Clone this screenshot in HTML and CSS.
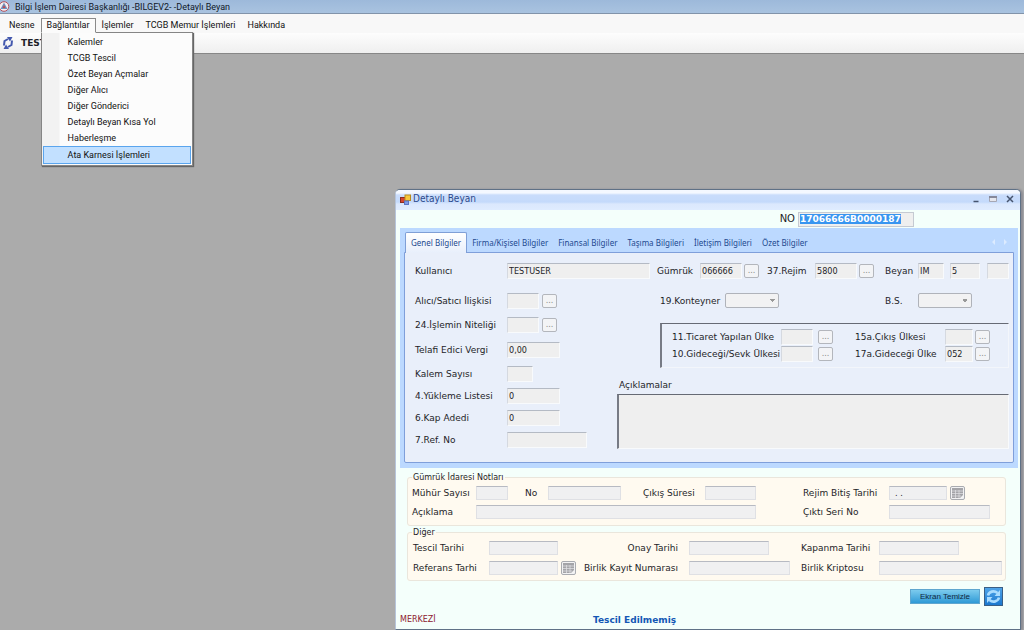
FILE: index.html
```html
<!DOCTYPE html>
<html lang="tr">
<head>
<meta charset="utf-8">
<title>Bilgi İşlem Dairesi Başkanlığı -BILGEV2- -Detaylı Beyan</title>
<link rel="stylesheet" href="styles.css">
</head>
<body>
<header class="app-title">
  <svg class="app-logo" width="11" height="11" viewBox="0 0 11 11" aria-hidden="true"><circle cx="5" cy="5.500" r="4.800" fill="#f6eef0" stroke="#b0525e"/><path d="M5 1.500L8.500 8H1.500z" fill="#6f94be"/><path d="M5 4l1.500 3h-3z" fill="#c4464e"/></svg>
  <span>Bilgi İşlem Dairesi Başkanlığı -BILGEV2- -Detaylı Beyan</span>
</header>
<nav class="menu-bar">
  <button class="menu-item" type="button">Nesne</button>
  <div class="menu-holder">
    <button class="menu-item menu-open" type="button" aria-expanded="true">Bağlantılar</button>
    <div class="dropdown" role="menu">
      <button type="button" role="menuitem">Kalemler</button>
      <button type="button" role="menuitem">TCGB Tescil</button>
      <button type="button" role="menuitem">Özet Beyan Açmalar</button>
      <button type="button" role="menuitem">Diğer Alıcı</button>
      <button type="button" role="menuitem">Diğer Gönderici</button>
      <button type="button" role="menuitem">Detaylı Beyan Kısa Yol</button>
      <button type="button" role="menuitem">Haberleşme</button>
      <button type="button" role="menuitem" class="hot">Ata Karnesi İşlemleri</button>
    </div>
  </div>
  <button class="menu-item" type="button">İşlemler</button>
  <button class="menu-item" type="button">TCGB Memur İşlemleri</button>
  <button class="menu-item" type="button">Hakkında</button>
</nav>
<div class="tool-bar">
  <svg width="12" height="12" viewBox="0 0 12 12" aria-hidden="true"><g fill="none" stroke="#4358ae" stroke-width="2"><path d="M2 8.500L2.500 4 6 2"/><path d="M10 3.500L9.500 8 6 10"/></g><path d="M5 0h5.500L8 4.500zM7 12H1.500L4 7.500z" fill="#4358ae"/></svg>
  <strong>TEST</strong>
</div>
<main class="mdi">
  <section class="window">
    <header class="win-title">
      <svg width="11" height="11" viewBox="0 0 11 11" aria-hidden="true"><rect x=".5" y="3.500" width="5" height="5" fill="#d4452f" stroke="#8c2c20"/><rect x="5" y="1" width="5.500" height="5.500" fill="#f6c73c" stroke="#b98a1c"/><rect x="4.500" y="7" width="4" height="3.500" fill="#7d9ae8" stroke="#5a74c4"/></svg>
      <h1>Detaylı Beyan</h1>
      <div class="win-buttons">
        <button type="button" aria-label="Simge durumuna küçült"><svg width="8" height="8" viewBox="0 0 8 8"><path d="M1.500 6.500h5" stroke="#46546e" stroke-width="1.500"/></svg></button>
        <button type="button" aria-label="Ekranı kapla"><svg width="8" height="8" viewBox="0 0 8 8"><path d="M.5 2.500h7v4h-7z" fill="#e4e6ee" stroke="#a5a7b4"/><path d="M0 2h8" stroke="#85889a" stroke-width="2"/></svg></button>
        <button type="button" aria-label="Kapat"><svg width="8" height="8" viewBox="0 0 8 8"><path d="M1 1l6 6M7 1L1 7" stroke="#46546e" stroke-width="1.500"/></svg></button>
      </div>
    </header>
    <form class="win-body">
      <div class="no-row">
        <label for="no">NO</label>
        <input id="no" class="no-input" value="17066666B0000187" autofocus>
      </div>
      <div class="tabs">
        <div class="tab-strip" role="tablist">
          <button type="button" role="tab" class="active" aria-selected="true">Genel Bilgiler</button>
          <button type="button" role="tab">Firma/Kişisel Bilgiler</button>
          <button type="button" role="tab">Finansal Bilgiler</button>
          <button type="button" role="tab">Taşıma Bilgileri</button>
          <button type="button" role="tab">İletişim Bilgileri</button>
          <button type="button" role="tab">Özet Bilgiler</button>
          <svg class="tab-arrows" width="20" height="8" viewBox="0 0 20 8" aria-hidden="true"><path d="M5 1v6L2 4zM14 1v6l3-3z" fill="#dcebff"/></svg>
        </div>
        <div class="tab-panel" role="tabpanel">
          <div class="top-row">
            <label for="user">Kullanıcı</label><input id="user" class="wide" value="TESTUSER">
            <label for="gumruk">Gümrük</label><input id="gumruk" class="w42" value="066666"><button type="button" class="more">...</button>
            <label for="rejim">37.Rejim</label><input id="rejim" class="w42" value="5800"><button type="button" class="more">...</button>
            <label for="beyan">Beyan</label><input id="beyan" class="w25" value="IM"><input class="w30" value="5" aria-label="Beyan 2"><input class="w22" aria-label="Beyan 3">
          </div>
          <div class="columns">
            <div class="left-form">
              <label for="iliski">Alıcı/Satıcı İlişkisi</label><div class="cell"><input id="iliski" class="w32"><button type="button" class="more">...</button></div>
              <label for="nitelik">24.İşlemin Niteliği</label><div class="cell"><input id="nitelik" class="w32"><button type="button" class="more">...</button></div>
              <label for="telafi">Telafi Edici Vergi</label><input id="telafi" class="w53" value="0,00">
              <label for="kalem">Kalem Sayısı</label><input id="kalem" class="w25">
              <label for="yukleme">4.Yükleme Listesi</label><input id="yukleme" class="w53" value="0">
              <label for="kap">6.Kap Adedi</label><input id="kap" class="w53" value="0">
              <label for="ref">7.Ref. No</label><input id="ref" class="w80">
            </div>
            <div class="right-form">
              <div class="select-row">
                <label for="konteyner">19.Konteyner</label><select id="konteyner"><option></option></select>
                <label for="bs">B.S.</label><select id="bs"><option></option></select>
              </div>
              <div class="country-box">
                <label for="u11">11.Ticaret Yapılan Ülke</label><input id="u11" class="w32"><button type="button" class="more">...</button>
                <label for="u15">15a.Çıkış Ülkesi</label><input id="u15" class="w28"><button type="button" class="more">...</button>
                <label for="u10">10.Gideceği/Sevk Ülkesi</label><input id="u10" class="w32"><button type="button" class="more">...</button>
                <label for="u17">17a.Gideceği Ülke</label><input id="u17" class="w28" value="052"><button type="button" class="more">...</button>
              </div>
              <label class="notes-label" for="notes">Açıklamalar</label>
              <textarea id="notes"></textarea>
            </div>
          </div>
        </div>
      </div>
      <fieldset class="group">
        <legend>Gümrük İdaresi Notları</legend>
        <div class="notes-grid">
          <label for="muhur">Mühür Sayısı</label><input id="muhur" class="w32">
          <label for="mno">No</label><input id="mno" class="w73">
          <label for="sure">Çıkış Süresi</label><input id="sure" class="w51">
          <label for="bitis">Rejim Bitiş Tarihi</label><div class="cell"><input id="bitis" class="w58 date" value=". ."><button type="button" class="cal" aria-label="Takvim"><svg width="11" height="10" viewBox="0 0 11 10"><path d="M0 0h11v7L8 10H0z" fill="#a4a4a8"/><path d="M0 3h11M0 5.500h11M0 8h9M3.500 2v8M7 2v8" stroke="#e4e4e6" stroke-width=".7"/></svg></button></div>
          <label for="aciklama">Açıklama</label><input id="aciklama" class="span">
          <label for="seri">Çıktı Seri No</label><input id="seri" class="w101">
        </div>
      </fieldset>
      <fieldset class="group">
        <legend>Diğer</legend>
        <div class="other-grid">
          <label for="tescil">Tescil Tarihi</label><input id="tescil" class="w69">
          <label class="end" for="onay">Onay Tarihi</label><input id="onay" class="w80">
          <label for="kapanma">Kapanma Tarihi</label><input id="kapanma" class="w80">
          <label for="referans">Referans Tarhi</label><div class="cell"><input id="referans" class="w69"><button type="button" class="cal" aria-label="Takvim"><svg width="11" height="10" viewBox="0 0 11 10"><path d="M0 0h11v7L8 10H0z" fill="#a4a4a8"/><path d="M0 3h11M0 5.500h11M0 8h9M3.500 2v8M7 2v8" stroke="#e4e4e6" stroke-width=".7"/></svg></button></div>
          <label class="end" for="kayit">Birlik Kayıt Numarası</label><input id="kayit" class="w101">
          <label for="kripto">Birlik Kriptosu</label><input id="kripto" class="wide-end">
        </div>
      </fieldset>
      <div class="actions">
        <button type="button" class="clear">Ekran Temizle</button>
        <button type="button" class="refresh" aria-label="Yenile"><svg width="17" height="17" viewBox="0 0 17 17"><g fill="none" stroke="#a9dcff" stroke-width="2.600"><path d="M3 7.500C4 3.500 9 2 12.500 5"/><path d="M14 9.500C13 13.500 8 15 4.500 12"/></g><path d="M15 2v6H9.500zM2 15V9h5.500z" fill="#a9dcff"/></svg></button>
      </div>
      <footer class="status"><span class="office">MERKEZİ</span><strong>Tescil Edilmemiş</strong></footer>
    </form>
  </section>
</main>
<script src="main.js"></script>
</body>
</html>
```
FILE: styles.css
```css
* { box-sizing: border-box; }
html, body { height: 100%; }
body {
  margin: 0;
  display: flex;
  flex-direction: column;
  overflow: hidden;
  background: #ababab;
  color: #1e1e28;
  font: 9px/12px "DejaVu Sans", Verdana, sans-serif;
}
button, input, select, textarea { font: inherit; color: inherit; margin: 0; }
button { padding: 0; border: 0; background: none; white-space: nowrap; }
svg { display: block; }
label { white-space: nowrap; }

.app-title, .menu-bar { font-family: Roboto, "Segoe UI", sans-serif; }
.app-title {
  display: flex;
  align-items: center;
  gap: 5px;
  height: 14px;
  flex: none;
  background: linear-gradient(#9db9da, #a9c3e0);
  border-bottom: 1px solid #8294aa;
  color: #101828;
}
.app-logo { margin-left: -1px; }
.menu-bar {
  display: flex;
  align-items: flex-end;
  flex: none;
  height: 19px;
  padding-left: 3px;
  background: #f8f8f8;
  color: #111;
}
.menu-item { height: 15px; padding: 0 5px; border: 1px solid transparent; line-height: 13px; }
.menu-holder { position: relative; }
.menu-open { position: relative; z-index: 3; background: #fbfbfb; border-color: #8a8a8a; border-bottom-color: #fbfbfb; }
.dropdown {
  position: absolute;
  z-index: 2;
  top: 14px;
  left: 0;
  width: 152px;
  display: grid;
  padding: 1px;
  border: 1px solid #858585;
  background: linear-gradient(90deg, #f2f2f2 17px, #fcfcfc 18px);
  box-shadow: 1px 1px 1px #666;
}
.dropdown button { height: 16px; padding-left: 24px; text-align: left; line-height: 14px; border: 1px solid transparent; }
.dropdown .hot { height: 18px; line-height: 16px; background: #c2e0ff; border-color: #5aa5ee; }
.tool-bar {
  display: flex;
  align-items: center;
  gap: 7px;
  flex: none;
  height: 21px;
  padding-left: 2px;
  background: linear-gradient(#fdfdfd, #efefef);
  border-bottom: 1px solid #878787;
}

.mdi { position: relative; flex: 1; }
.window {
  position: absolute;
  top: 135px;
  left: 395px;
  right: 3px;
  bottom: 0;
  display: flex;
  flex-direction: column;
  border: 1px solid #5f7186;
  border-left-color: #b6c4da;
  border-radius: 5px 5px 0 0;
  background: #f4fffb;
  box-shadow: 2px 0 2px #8b8b93;
}
.win-title {
  display: flex;
  align-items: center;
  gap: 2px;
  height: 20px;
  flex: none;
  padding: 0 6px 2px 4px;
  border-radius: 4px 4px 0 0;
  background: linear-gradient(#f4f8ff 3px, #c9dcfb 5px, #c4dafb 12px, #dbe8fd 14px, #dfecff);
  color: #2c4a8c;
}
.win-title h1 { margin: 0; font: 10px/14px "DejaVu Sans Condensed", Tahoma, sans-serif; }
.win-buttons { display: flex; gap: 9px; margin-left: auto; }
.win-body { display: flex; flex-direction: column; flex: 1; margin: 0; }

input, select, textarea {
  height: 16px;
  min-width: 0;
  padding: 0 1px;
  border: 1px solid #f8fafc;
  border-top-color: #b4bac4;
  border-left-color: #d5d9e0;
  border-radius: 0;
  background: #efefef;
  outline: none;
  font-family: "DejaVu Sans Condensed", Tahoma, sans-serif;
}
.w22 { width: 22px; }
.w25 { width: 26px; }
.w28 { width: 28px; }
.w30 { width: 30px; }
.w32 { width: 32px; }
.w42 { width: 42px; }
.w51 { width: 51px; }
.w53 { width: 53px; }
.w58 { width: 58px; }
.w69 { width: 69px; }
.w73 { width: 73px; }
.w80 { width: 80px; }
.w101 { width: 101px; }
.more {
  width: 15px;
  height: 14px;
  border: 1px solid #b3b6bc;
  border-radius: 2px;
  background: #f3f4f6;
  color: #888;
  font-size: 8px;
  line-height: 8px;
}
.cell { display: flex; align-items: center; gap: 3px; }

.no-row { display: flex; align-items: center; justify-content: flex-end; gap: 3px; height: 18px; padding-right: 106px; }
.no-row label { font-size: 10px; }
.no-input { width: 116px; height: 15px; border-color: #c5cad2; font-family: "DejaVu Sans", Verdana, sans-serif; font-weight: bold; }
.no-input::selection { background: #3895f0; color: #fff; }

.tabs { margin: 0 2px 0 4px; padding: 4px 4px 5px 4px; background: #bcd9ff; }
.tab-strip { display: flex; align-items: stretch; height: 20px; padding-left: 1px; font-family: "Noto Sans", "Segoe UI", sans-serif; font-size: 8px; color: #22498f; }
.tab-strip button { padding: 0 4px; border: 1px solid transparent; border-bottom: 0; }
.tab-strip .active { position: relative; z-index: 1; margin-bottom: -1px; padding: 0 5px; border-color: #7f9fd6; border-radius: 2px 2px 0 0; background: linear-gradient(#fff, #e8effb); }
.tab-arrows { margin: 6px 4px 0 auto; }
.tab-panel { padding: 7px 4px 11px 10px; border: 1px solid #7f9fda; border-radius: 0 0 2px 2px; background: #e9effa; }
.top-row {
  display: grid;
  grid-template-columns: 92px minmax(80px, 1fr) 43px 44px 23px 48px 44px 26px 33px 32px 37px 22px;
  align-items: center;
  height: 22px;
  margin-bottom: 7px;
}
.top-row .wide { margin-right: 7px; }
.columns { display: grid; grid-template-columns: 202px 1fr; }
.left-form { display: grid; grid-template-columns: 92px 1fr; grid-template-rows: 24px 23px 27px repeat(4, 22px); align-items: center; }
.right-form { display: flex; flex-direction: column; }
.select-row { display: grid; grid-template-columns: 65px 160px 33px 54px; align-items: center; height: 23px; margin: 0 0 11px 43px; }
select {
  width: 54px;
  height: 15px;
  appearance: none;
  border-color: #b0b3ba;
  border-radius: 2px;
  background:
    linear-gradient(45deg, transparent 50%, #999 50%) right 6px top 5px / 3px 3px no-repeat,
    linear-gradient(-45deg, transparent 50%, #999 50%) right 3px top 5px / 3px 3px no-repeat,
    #f2f2f3;
}
.country-box {
  display: grid;
  grid-template-columns: 109px 37px 37px 90px 30px 15px;
  grid-auto-rows: 17px;
  align-items: center;
  height: 45px;
  margin-left: 43px;
  padding: 4px 0 0 10px;
  border: 1px solid #f3f6fb;
  border-top-color: #666a74;
  border-left: 2px solid #777b85;
}
.notes-label { margin: 11px 0 3px 2px; }
textarea { width: 100%; height: 55px; resize: none; border-top-color: #666a74; border-left: 2px solid #777b85; }

.group { min-width: 0; margin: 0 14px 0 11px; padding: 0 3px 4px 4px; border: 1px solid #eae6dc; border-radius: 3px; background: #fffaf0; }
.group + .group { margin-top: 1px; padding-bottom: 2px; }
.tabs + .group { margin-top: 4px; }
.group legend { height: 11px; padding: 0 1px; font-size: 8px; line-height: 11px; }
.group input { height: 14px; background: #f0f0f1; border-color: #dfe0e4; border-top-color: #b7bac2; }
.notes-grid { display: grid; grid-template-columns: 64px 49px 23px 95px 62px 98px 86px 1fr; grid-auto-rows: 19px; align-items: center; }
.notes-grid .span { grid-column: 2 / 7; width: 280px; }
.notes-grid .date { padding-left: 5px; }
.other-grid { display: grid; grid-template-columns: 76px 99px 101px 112px 78px 1fr; grid-auto-rows: 20px; align-items: center; padding-left: 1px; }
.other-grid .end { justify-self: end; margin-right: 11px; }
.wide-end { width: 100%; }
.cal { display: grid; place-items: center; width: 15px; height: 14px; border: 1px solid #a9abb0; border-radius: 2px; background: #f2f2f3; }

.actions { display: flex; align-items: center; justify-content: flex-end; gap: 4px; padding: 6px 17px 0 0; }
.clear { width: 70px; height: 15px; border: 1px solid #5fa6cf; background: linear-gradient(#7ccbee, #2f9ad6); color: #10283c; font: 8px/12px "Liberation Sans", Arial, sans-serif; }
.refresh { display: grid; place-items: center; width: 19px; height: 19px; border: 1px solid #3a5f85; background: linear-gradient(#4fa4e8, #1b78cf); }
.status { display: flex; gap: 6px; margin-top: 8px; padding-left: 4px; }
.office { width: 187px; color: #8c2030; font-size: 8px; }
.status strong { color: #1357b5; }
```
FILE: main.js
```js
const noInput = document.getElementById("no");
noInput.focus();
noInput.select();
```
